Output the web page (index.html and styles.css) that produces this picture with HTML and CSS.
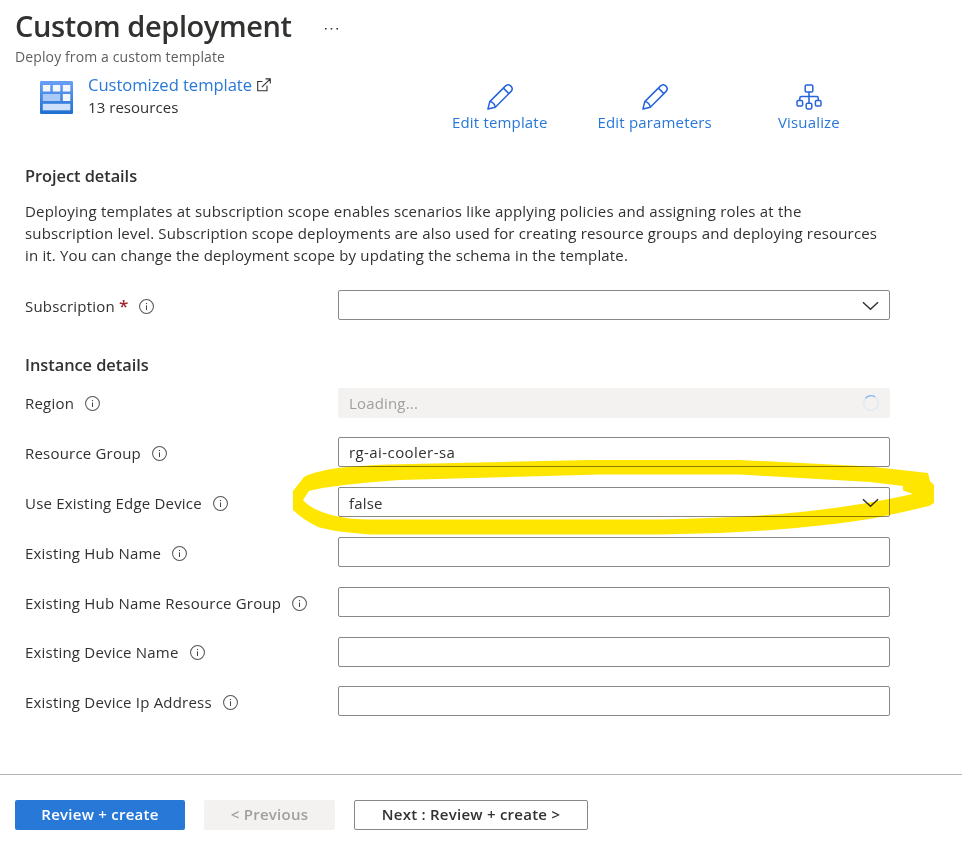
FILE: index.html
```html
<!DOCTYPE html>
<html lang="en">
<head>
<meta charset="utf-8">
<title>Custom deployment</title>
<link rel="stylesheet" href="styles.css">
</head>
<body>
<svg class="defs" width="0" height="0" aria-hidden="true">
  <symbol id="info" viewBox="0 0 16 16"><circle cx="8" cy="8" r="7.4" fill="none" stroke="#555" stroke-width="1.1"/><path d="M8 6.8v5" stroke="#444" stroke-width="1.1"/><path d="M8 4.2v1.2" stroke="#444" stroke-width="1.2"/></symbol>
  <symbol id="chevron" viewBox="0 0 18 10"><path d="M1 1l8 7.500L17 1" fill="none" stroke="#323130" stroke-width="1.5"/></symbol>
  <symbol id="pencil" viewBox="0 0 26 26"><g fill="none" stroke="#2563dc" stroke-width="1.500" stroke-linejoin="round"><path d="M.9 25.100L2.800 17.600 18.600 1.900a3.900 3.900 0 0 1 5.500 5.500L8.300 23.200z"/><path d="M16.400 4.100l5.500 5.500M2.800 17.600c2.800.5 4.800 2.600 5.500 5.600"/></g></symbol>
  <symbol id="tree" viewBox="0 0 26 26"><g fill="none" stroke="#2563dc" stroke-width="1.500"><rect x="9.200" y="1" width="7.600" height="7" rx="1.300"/><rect x="1" y="16.500" width="5.600" height="5.600" rx="1.300"/><rect x="10.200" y="19.300" width="5.600" height="5.600" rx="1.300"/><rect x="19.400" y="16.500" width="5.600" height="5.600" rx="1.300"/><path d="M13 8v11.300M3.800 16.500v-2.500q0-1.500 1.500-1.500h15.400q1.500 0 1.500 1.500v2.500"/></g></symbol>
</svg>
<header class="header">
  <div class="title-row"><h1>Custom deployment</h1><svg class="more" viewBox="0 0 15 4"><path d="M1 1h1.600v1.600H1zM6.700 1h1.600v1.600H6.700zM12.400 1H14v1.600h-1.600z" fill="#323130"/></svg></div>
  <p class="subtitle">Deploy from a custom template</p>
</header>
<section class="template">
  <svg class="template-icon" viewBox="0 0 33 33">
    <defs><linearGradient id="g" x2="0" y2="1"><stop stop-color="#6a9ff8"/><stop offset="1" stop-color="#1f6fd0"/></linearGradient></defs>
    <rect width="33" height="33" rx="1.200" fill="url(#g)"/>
    <path d="M2.800 4h7.500v6.500H2.800zM12.800 4h7.500v6.500h-7.500zM22.800 4h7.500v6.500h-7.500zM22.800 13h7.500v7h-7.500z" fill="#f3f6fd"/><path d="M2.800 13h17.500v7H2.800z" fill="#a9c9f7"/><path d="M2.800 22.800h27.500v6.500H2.800z" fill="#cfe1fa"/>
  </svg>
  <div class="template-info">
    <div class="template-name"><a>Customized template</a><svg class="external" viewBox="0 0 14 14"><path d="M5.500 3.500H.7v9.300h9.300V7.500M8.500.9h4.800v4.600M13.300.9L4.800 9.200" fill="none" stroke="#323130" stroke-width="1.100"/></svg></div>
    <div class="count">13 resources</div>
  </div>
  <nav class="actions">
    <a class="action"><svg><use href="#pencil"/></svg><span>Edit template</span></a>
    <a class="action"><svg><use href="#pencil"/></svg><span>Edit parameters</span></a>
    <a class="action"><svg><use href="#tree"/></svg><span>Visualize</span></a>
  </nav>
</section>
<main class="form">
  <h2>Project details</h2>
  <p class="description"><span class="first">Deploying templates at subscription scope enables scenarios like applying policies and assigning roles at the</span><span>subscription level. Subscription scope deployments are also used for creating resource groups and deploying resources</span><span>in it. You can change the deployment scope by updating the schema in the template.</span></p>
  <div class="row"><label>Subscription <b class="required">*</b></label><svg class="info"><use href="#info"/></svg><div class="field"><svg class="chevron"><use href="#chevron"/></svg></div></div>
  <h2 class="instance">Instance details</h2>
  <div class="rows">
    <div class="row tight"><label>Region</label><svg class="info"><use href="#info"/></svg><div class="field loading"><span>Loading...</span><svg class="spinner" viewBox="0 0 16 16"><circle cx="8" cy="8" r="7.300" fill="none" stroke="#dce8f5" stroke-width="1.200"/><path d="M2.500 3.200A7.300 7.300 0 0 1 12 1.900" fill="none" stroke="#86b9ec" stroke-width="1.300"/></svg></div></div>
    <div class="row"><label>Resource Group</label><svg class="info"><use href="#info"/></svg><div class="field"><span class="group">rg-ai-cooler-sa</span></div></div>
    <div class="row"><label>Use Existing Edge Device</label><svg class="info"><use href="#info"/></svg><div class="field"><span class="value">false</span><svg class="chevron"><use href="#chevron"/></svg></div></div>
    <div class="row"><label>Existing Hub Name</label><svg class="info"><use href="#info"/></svg><div class="field"></div></div>
    <div class="row"><label>Existing Hub Name Resource Group</label><svg class="info"><use href="#info"/></svg><div class="field"></div></div>
    <div class="row tight"><label>Existing Device Name</label><svg class="info"><use href="#info"/></svg><div class="field"></div></div>
    <div class="row"><label>Existing Device Ip Address</label><svg class="info"><use href="#info"/></svg><div class="field"></div></div>
  </div>
</main>
<footer class="footer">
  <div class="button primary">Review + create</div><div class="button disabled">&lt; Previous</div><div class="button next">Next : Review + create &gt;</div>
</footer>
<svg class="marker" viewBox="280 450 670 100"><path fill="#ffe600" fill-rule="evenodd" d="M293 491L304 477Q312 472 338 468Q360 465.500 390 464.500L590 460L740 460L870 466.500L928 473L930 481L934 485V503L929 506Q900 513 875 518Q810 529 720 533L660 534.500H370Q335 532 318 527Q302 519 293 510zM303 500Q312 511 338 516.500Q350 519.500 370 519.500H660Q730 518 780 514Q850 508 913 494L903 490.500V486L870 482L740 474.500H600L400 480Q330 485 309 491z"/></svg>
</body>
</html>
```
FILE: styles.css
```css
* { box-sizing: border-box; }
body { margin: 0; width: 962px; height: 846px; overflow: hidden; display: flex; flex-direction: column; background: #fff; color: #323130; font: 15px/22px "Open Sans", "Noto Sans", sans-serif; letter-spacing: .17px; position: relative; }
h1, h2, p { margin: 0; }
svg { display: block; flex: none; }
.defs { position: absolute; }
.header { height: 72px; padding: 6px 15px 0; }
.title-row { display: flex; align-items: center; height: 41px; }
h1 { width: 309px; padding-bottom: 2px; font-size: 29px; line-height: 40px; font-weight: 600; letter-spacing: -.42px; white-space: nowrap; }
.more { width: 15px; height: 4px; margin-top: 4px; }
.subtitle { color: #605e5c; font-size: 14px; line-height: 20px; letter-spacing: .12px; }
.template { display: flex; height: 92px; padding-left: 40px; }
.template-icon { width: 33px; height: 33px; margin-top: 9px; }
.template-info { width: 379px; padding-left: 15px; }
.template-name { display: flex; align-items: center; gap: 5px; height: 26px; font-size: 16.6px; letter-spacing: -.05px; }
a { color: #2878d7; }
.external { width: 14px; height: 14px; margin-bottom: 1px; }
.count { line-height: 18px; letter-spacing: .05px; }
.actions { display: flex; padding-top: 12px; gap: 50px; }
.action { display: flex; flex-direction: column; align-items: center; white-space: nowrap; }
.action svg { width: 26px; height: 26px; }
.action span { line-height: 24px; }
.action:last-child { margin-left: 16px; }
.form { height: 610px; padding: 0 25px; }
h2 { font-size: 16.4px; line-height: 24px; font-weight: 600; letter-spacing: -.05px; }
.description { margin: 12px 0 24px; white-space: nowrap; }
.description span { display: block; }
.description .first { letter-spacing: .205px; }
.row { display: flex; align-items: center; height: 30px; width: 865px; }
label { padding-top: 2px; letter-spacing: .2px; }
.required { color: #a4262c; font-size: 17px; line-height: 16px; font-weight: 600; }
.info { width: 15px; height: 15px; margin: 2px 0 0 11px; }
.tight label { padding-top: 0; }
.tight .info { margin-top: 1px; }
.field { display: flex; align-items: center; justify-content: space-between; width: 552px; height: 30px; margin-left: auto; padding: 0 10px; border: 1px solid #8a8886; border-radius: 2px; }
.value { padding-top: 2px; }
.group { letter-spacing: .42px; }
.chevron { width: 17px; height: 10px; margin: 1px 0 0 auto; }
.loading { background: #f3f2f1; border-color: #f3f2f1; color: #a19f9d; }
.spinner { width: 16px; height: 16px; }
.instance { margin: 33px 0 11px; }
.rows .row { margin-bottom: 20px; }
.rows .tight { margin-bottom: 19px; }
.footer { height: 72px; display: flex; gap: 19px; padding: 25px 15px 0; border-top: 1px solid #b5b3b1; }
.button { height: 30px; display: flex; align-items: center; justify-content: center; padding-bottom: 2px; border-radius: 2px; font-weight: 600; letter-spacing: .25px; white-space: nowrap; }
.primary { width: 170px; background: #2878d7; color: #fff; }
.disabled { width: 131px; background: #f3f2f1; color: #a19f9d; }
.next { width: 234px; border: 1px solid #8a8886; }
.marker { position: absolute; left: 280px; top: 450px; width: 670px; height: 100px; mix-blend-mode: multiply; }
```
